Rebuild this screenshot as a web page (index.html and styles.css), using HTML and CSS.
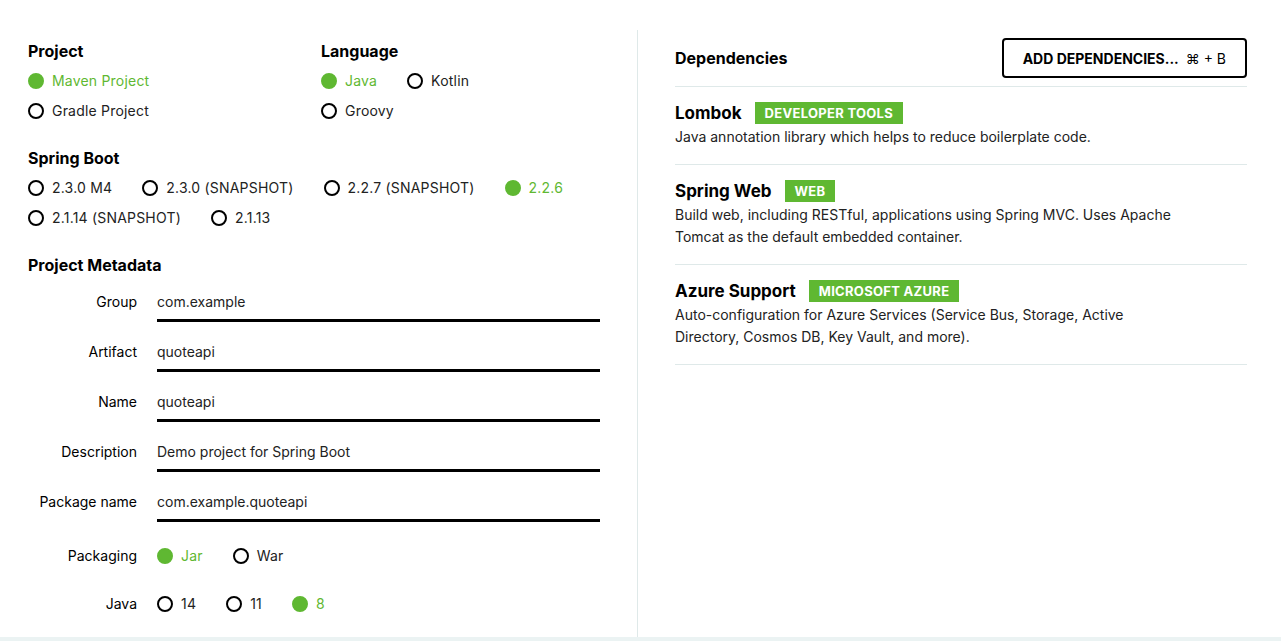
FILE: index.html
```html
<!DOCTYPE html>
<html lang="en">
<head>
  <meta charset="UTF-8">
  <meta name="viewport" content="width=device-width, initial-scale=1.0">
  <title>Spring Initializr</title>
  <link rel="stylesheet" href="styles.css">
</head>
<body>
  <div class="main">
    <div class="left">
      <div class="top-row">
        <div class="group">
          <div class="title">Project</div>
          <div class="radios">
            <div class="radio-row"><span class="radio checked"><i></i>Maven Project</span></div>
            <div class="radio-row"><span class="radio"><i></i>Gradle Project</span></div>
          </div>
        </div>
        <div class="group">
          <div class="title">Language</div>
          <div class="radios">
            <div class="radio-row">
              <span class="radio checked"><i></i>Java</span>
              <span class="radio"><i></i>Kotlin</span>
            </div>
            <div class="radio-row"><span class="radio"><i></i>Groovy</span></div>
          </div>
        </div>
      </div>

      <div class="group spaced">
        <div class="title">Spring Boot</div>
        <div class="radios">
          <div class="radio-row">
            <span class="radio"><i></i>2.3.0 M4</span>
            <span class="radio"><i></i>2.3.0 (SNAPSHOT)</span>
            <span class="radio"><i></i>2.2.7 (SNAPSHOT)</span>
            <span class="radio checked"><i></i>2.2.6</span>
          </div>
          <div class="radio-row">
            <span class="radio"><i></i>2.1.14 (SNAPSHOT)</span>
            <span class="radio"><i></i>2.1.13</span>
          </div>
        </div>
      </div>

      <div class="group spaced">
        <div class="title">Project Metadata</div>
        <div class="fields">
          <div class="field"><label>Group</label><div class="input">com.example</div></div>
          <div class="field"><label>Artifact</label><div class="input">quoteapi</div></div>
          <div class="field"><label>Name</label><div class="input">quoteapi</div></div>
          <div class="field"><label>Description</label><div class="input">Demo project for Spring Boot</div></div>
          <div class="field"><label>Package name</label><div class="input">com.example.quoteapi</div></div>
          <div class="field choice"><label>Packaging</label>
            <div class="radio-row">
              <span class="radio checked"><i></i>Jar</span>
              <span class="radio"><i></i>War</span>
            </div>
          </div>
          <div class="field choice"><label>Java</label>
            <div class="radio-row">
              <span class="radio"><i></i>14</span>
              <span class="radio"><i></i>11</span>
              <span class="radio checked"><i></i>8</span>
            </div>
          </div>
        </div>
      </div>
    </div>

    <div class="right">
      <div class="deps-head">
        <div class="title">Dependencies</div>
        <button class="add-button">ADD DEPENDENCIES... <span class="key">⌘ + B</span></button>
      </div>
      <div class="dep">
        <div class="dep-title">Lombok <span class="tag">Developer Tools</span></div>
        <p class="dep-desc">Java annotation library which helps to reduce boilerplate code.</p>
      </div>
      <div class="dep">
        <div class="dep-title">Spring Web <span class="tag">Web</span></div>
        <p class="dep-desc">Build web, including RESTful, applications using Spring MVC. Uses Apache Tomcat as the default embedded container.</p>
      </div>
      <div class="dep">
        <div class="dep-title">Azure Support <span class="tag">Microsoft Azure</span></div>
        <p class="dep-desc">Auto-configuration for Azure Services (Service Bus, Storage, Active Directory, Cosmos DB, Key Vault, and more).</p>
      </div>
    </div>
  </div>
</body>
</html>
```

FILE: styles.css
```css
body {
  margin: 0;
  font-family: "Inter", "Liberation Sans", sans-serif;
  font-size: 14px;
  color: #222;
  background: #fff;
}
.main {
  display: flex;
  height: 607px;
  padding-top: 30px;
  border-bottom: 4px solid #ebf3f3;
}
.left {
  width: 572px;
  padding: 0 37px 0 28px;
  border-right: 1px solid #dfe9e9;
}
.right {
  flex: 1;
  padding: 0 34px 0 37px;
}
.title {
  font-size: 16px;
  font-weight: 700;
  line-height: 20px;
  color: #000;
}
.group > .title {
  margin-top: 11px;
}
.group.spaced > .title {
  margin-top: 27px;
}
.top-row {
  display: grid;
  grid-template-columns: 293px auto;
}
.radios {
  display: flex;
  flex-direction: column;
  gap: 10px;
  margin-top: 10px;
}
.radio-row {
  display: flex;
  gap: 30px;
}
.radio {
  display: flex;
  align-items: center;
  line-height: 20px;
  color: #222;
  letter-spacing: 0.2px;
}
.radio i {
  width: 12px;
  height: 12px;
  border: 2px solid #000;
  border-radius: 50%;
  margin-right: 8px;
}
.radio.checked {
  color: #5fb832;
}
.radio.checked i {
  border-color: #5fb832;
  background: #5fb832;
}
.fields {
  margin-top: 17px;
}
.field {
  display: flex;
  align-items: flex-start;
  margin-bottom: 20px;
}
.field label {
  width: 109px;
  margin-right: 20px;
  text-align: right;
  line-height: 20px;
  color: #000;
}
.field .input {
  flex: 1;
  line-height: 20px;
  padding-bottom: 7px;
  border-bottom: 3px solid #000;
  color: #222;
}
.field.choice {
  margin-top: 24px;
  margin-bottom: 28px;
}
.field.choice + .field.choice {
  margin-top: 0;
}
.deps-head {
  display: flex;
  justify-content: space-between;
  align-items: center;
  padding: 8px 0;
  border-bottom: 1px solid #dfe9e9;
}
.add-button {
  height: 40px;
  padding: 0 19px;
  border: 2px solid #000;
  border-radius: 4px;
  background: #fff;
  font-family: inherit;
  font-size: 14px;
  font-weight: 700;
  color: #000;
  cursor: pointer;
}
.add-button .key {
  font-weight: 400;
  margin-left: 4px;
}
.dep {
  padding: 15px 0 16px;
  border-bottom: 1px solid #dfe9e9;
}
.dep-title {
  display: flex;
  align-items: center;
  font-size: 17px;
  font-weight: 700;
  color: #000;
  height: 22px;
}
.tag {
  margin-left: 13px;
  padding: 0 10px;
  line-height: 22px;
  background: #5fb832;
  color: #fff;
  font-size: 13px;
  font-weight: 700;
  letter-spacing: 0.3px;
  text-transform: uppercase;
}
.dep-desc {
  margin: 2px 0 0;
  max-width: 500px;
  line-height: 22px;
  color: #222;
}
```
